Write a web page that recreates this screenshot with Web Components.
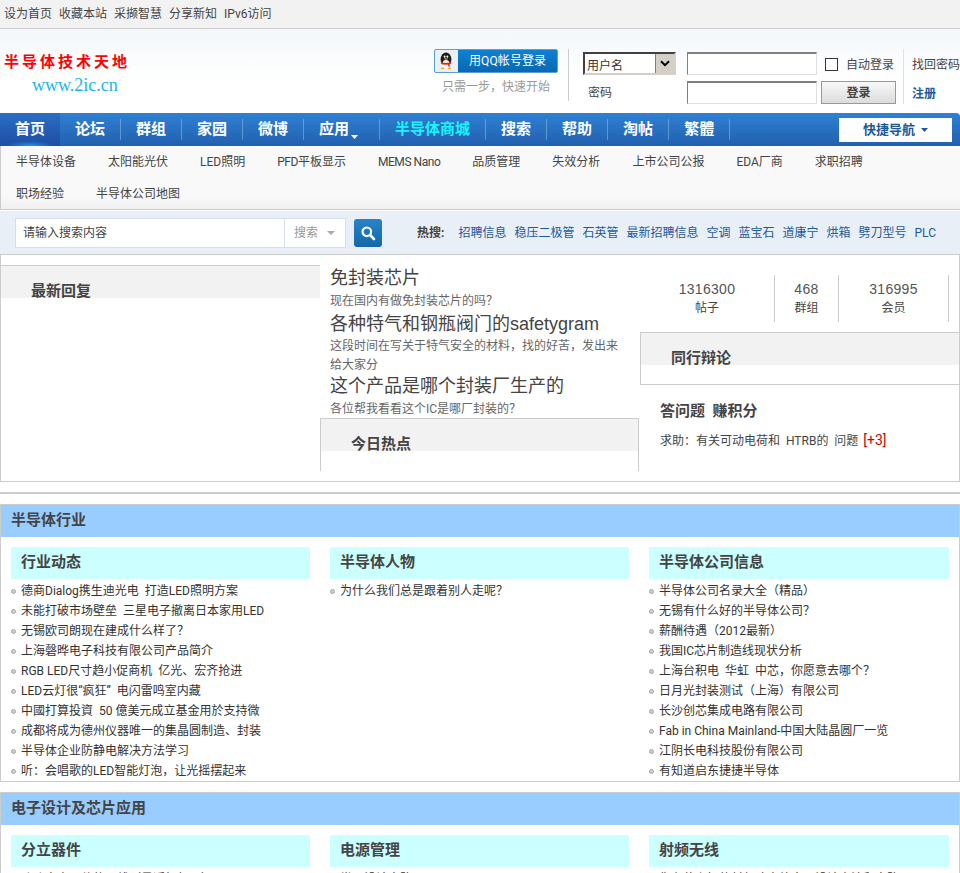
<!doctype html>
<html lang="zh-CN">
<head>
<meta charset="utf-8">
<title>半导体技术天地</title>
<style>
html { overflow: hidden; }
body {
  margin: 0;
  background: #fff;
  color: #444;
  font: 12px/20px Roboto, "Noto Sans CJK SC", sans-serif;
}
</style>
</head>
<body>
<site-topbar></site-topbar>
<site-header></site-header>
<site-nav></site-nav>
<site-subnav></site-subnav>
<site-search></site-search>

<home-panel>
  <clip-box slot="replies" title="最新回复"></clip-box>
  <hot-topic slot="topics" title="免封装芯片" style="--pt:2px;--pb:1px">现在国内有做免封装芯片的吗？</hot-topic>
  <hot-topic slot="topics" title="各种特气和钢瓶阀门的safetygram" style="--pt:1px;--pb:-1px">这段时间在写关于特气安全的材料，找的好苦，发出来给大家分</hot-topic>
  <hot-topic slot="topics" title="这个产品是哪个封装厂生产的" style="--pt:2px;--pb:-1px">各位帮我看看这个IC是哪厂封装的？</hot-topic>
  <clip-box slot="topics" title="今日热点" inset></clip-box>
  <stat-row slot="side"></stat-row>
  <clip-box slot="side" title="同行辩论" wide></clip-box>
  <ask-box slot="side"></ask-box>
</home-panel>

<hr-line></hr-line>

<forum-section title="半导体行业">
  <forum-column title="行业动态">
    <forum-item>德商Dialog携生迪光电&nbsp; 打造LED照明方案</forum-item>
    <forum-item>未能打破市场壁垒&nbsp; 三星电子撤离日本家用LED</forum-item>
    <forum-item>无锡欧司朗现在建成什么样了？</forum-item>
    <forum-item>上海磬晔电子科技有限公司产品简介</forum-item>
    <forum-item>RGB LED尺寸趋小促商机&nbsp; 亿光、宏齐抢进</forum-item>
    <forum-item>LED云灯很“疯狂”&nbsp; 电闪雷鸣室内藏</forum-item>
    <forum-item>中國打算投資&nbsp; 50 億美元成立基金用於支持微</forum-item>
    <forum-item>成都将成为德州仪器唯一的集晶圆制造、封装</forum-item>
    <forum-item>半导体企业防静电解决方法学习</forum-item>
    <forum-item>听：会唱歌的LED智能灯泡，让光摇摆起来</forum-item>
  </forum-column>
  <forum-column title="半导体人物">
    <forum-item>为什么我们总是跟着别人走呢？</forum-item>
  </forum-column>
  <forum-column title="半导体公司信息">
    <forum-item>半导体公司名录大全（精品）</forum-item>
    <forum-item>无锡有什么好的半导体公司？</forum-item>
    <forum-item>薪酬待遇（2012最新）</forum-item>
    <forum-item>我国IC芯片制造线现状分析</forum-item>
    <forum-item>上海台积电&nbsp; 华虹&nbsp; 中芯，你愿意去哪个？</forum-item>
    <forum-item>日月光封装测试（上海）有限公司</forum-item>
    <forum-item>长沙创芯集成电路有限公司</forum-item>
    <forum-item>Fab in China Mainland-中国大陆晶圆厂一览</forum-item>
    <forum-item>江阴长电科技股份有限公司</forum-item>
    <forum-item>有知道启东捷捷半导体</forum-item>
  </forum-column>
</forum-section>

<forum-section title="电子设计及芯片应用">
  <forum-column title="分立器件">
    <forum-item>聊聊电容器件的明线（最近如何用）</forum-item>
  </forum-column>
  <forum-column title="电源管理">
    <forum-item>常见设计电路图</forum-item>
  </forum-column>
  <forum-column title="射频无线">
    <forum-item>你有什么好的射频功率放大器设计方法和电路</forum-item>
  </forum-column>
</forum-section>

<script>
// small helper, every element just stamps a template into an open shadow root
function shadow(el, html) {
  const root = el.attachShadow({ mode: "open" });
  root.innerHTML = html;
  return root;
}

const linkList = (items) => items.map((t) => `<a>${t}</a>`).join("");

class SiteTopbar extends HTMLElement {
  connectedCallback() {
    shadow(this, `<style>
      :host { display: flex; height: 28px; padding-left: 4px; gap: 7px; line-height: 28px; background: #f2f2f2; border-bottom: 1px solid #ccc; color: #444; }
    </style>${linkList(["设为首页", "收藏本站", "采撷智慧", "分享新知", "IPv6访问"])}`);
  }
}
customElements.define("site-topbar", SiteTopbar);

class QqButton extends HTMLElement {
  connectedCallback() {
    shadow(this, `<style>
      :host { display: flex; width: 124px; height: 24px; box-sizing: border-box; border: 1px solid #5f9fd0; border-radius: 2px; overflow: hidden; background: linear-gradient(#0f80d0, #0868b4); color: #fff; line-height: 22px; }
      .ico { width: 23px; background: #e9f1f7; display: flex; align-items: center; justify-content: center; }
      span { padding-left: 11px; letter-spacing: .1px; }
    </style>
    <div class="ico"><svg width="16" height="18" viewBox="0 0 16 18">
      <ellipse cx="8" cy="7.5" rx="5.4" ry="7" fill="#1c1c1c"/>
      <ellipse cx="8" cy="12" rx="3.6" ry="4" fill="#f4f4f4"/>
      <path d="M3 9.5 Q8 12.5 13 9.5 L13.2 11.5 Q8 14 2.8 11.5Z" fill="#e2231a"/>
      <path d="M10.5 11.5 L12.5 15 L9.8 14Z" fill="#e2231a"/>
      <ellipse cx="6.6" cy="4.6" rx=".9" ry="1.2" fill="#fff"/>
      <ellipse cx="9.4" cy="4.6" rx=".9" ry="1.2" fill="#fff"/>
      <path d="M5.8 6.8 Q8 5.8 10.2 6.8 Q8 8.6 5.8 6.8Z" fill="#f5a81c"/>
      <path d="M2.5 16.5 Q5 14.5 6.5 16.8 Q4.5 17.8 2.5 16.5ZM13.5 16.5 Q11 14.5 9.5 16.8 Q11.5 17.8 13.5 16.5Z" fill="#f5a81c"/>
    </svg></div>
    <span>用QQ帐号登录</span>`);
  }
}
customElements.define("qq-button", QqButton);

class LoginBar extends HTMLElement {
  connectedCallback() {
    shadow(this, `<style>
      :host { display: flex; height: 55px; font-size: 12px; }
      .qq { width: 134px; }
      .qq p { margin: 4px 0 0 8px; color: #999; }
      .form { display: grid; grid-template-columns: 104px 130px 4px 75px; grid-template-rows: 23px 23px; row-gap: 6px; padding: 3px 0 0 14px; border-left: 1px solid #ccc; box-sizing: border-box; height: 52px; width: 328px; }
      .sel { position: relative; width: 93px; height: 23px; box-sizing: border-box; border: 2px solid; border-color: #404040 #d4d0c8 #d4d0c8 #404040; background: #fff; }
      select { appearance: none; border: 0; background: transparent; padding: 2px 0 0 2px; width: 100%; height: 100%; font: inherit; color: #333; outline: none; }
      .arr { position: absolute; right: 0; top: 0; bottom: 0; width: 18px; background: #d4d0c8; border-left: 1px solid #808080; display: flex; align-items: center; justify-content: center; pointer-events: none; }
      input[type=text], input[type=password] { box-sizing: border-box; width: 130px; height: 23px; margin: 0; padding: 0; border: 1px solid; border-color: #808080 #dfdfdf #dfdfdf #808080; border-width: 2px 1px 1px 1px; background: #fff; }
      .pw { padding-left: 5px; line-height: 25px; color: #444; }
      .auto { grid-column: 3 / 5; display: flex; align-items: center; white-space: nowrap; margin: 1px 0 0 8px; width: 90px; height: 23px; }
      .box { width: 11px; height: 11px; border: 1px solid #333; background: #fff; margin-right: 8px; flex: none; }
      button { grid-column: 4; box-sizing: border-box; width: 75px; height: 23px; border: 1px solid #999; background: linear-gradient(#f8f8f8, #dcdcdc); font: inherit; font-weight: bold; color: #444; padding: 0; }
      .links { border-left: 1px solid #d8e2ec; margin-left: 7px; padding: 2px 0 0 8px; box-sizing: border-box; height: 55px; display: flex; flex-direction: column; }
      .links a { line-height: 29px; white-space: nowrap; color: #444; }
      .links a + a { color: #1d5a9a; font-weight: bold; }
    </style>
    <div class="qq"><qq-button></qq-button><p>只需一步，快速开始</p></div>
    <div class="form">
      <div class="sel">
        <select><option>用户名</option></select>
        <div class="arr"><svg width="10" height="7" viewBox="0 0 10 7"><path d="M1 1.2 L5 5.2 L9 1.2" fill="none" stroke="#000" stroke-width="2"/></svg></div>
      </div>
      <input type="text">
      <div class="auto"><span class="box"></span>自动登录</div>
      <div class="pw">密码</div>
      <input type="password">
      <button>登录</button>
    </div>
    <div class="links"><a>找回密码</a><a>注册</a></div>`);
  }
}
customElements.define("login-bar", LoginBar);

class SiteHeader extends HTMLElement {
  connectedCallback() {
    shadow(this, `<style>
      :host { display: flex; justify-content: space-between; height: 84px; box-sizing: border-box; padding: 20px 0 0 4px; background: linear-gradient(#f3f7fb, #fff 60%); }
      .cn { color: #f00; font-size: 15px; font-weight: bold; letter-spacing: 3px; line-height: 26px; white-space: nowrap; }
      .en { color: #22b5e6; font: 18px/20px "Liberation Serif", serif; margin-left: 28px; }
    </style>
    <div><div class="cn">半导体技术天地</div><div class="en">www.2ic.cn</div></div>
    <login-bar></login-bar>`);
  }
}
customElements.define("site-header", SiteHeader);

class SiteNav extends HTMLElement {
  connectedCallback() {
    const items = ["论坛", "群组", "家园", "微博"].map((t) => `<a>${t}</a>`).join("");
    shadow(this, `<style>
      :host { display: flex; align-items: center; height: 33px; color: #fff; font-size: 15px; font-weight: bold; background: linear-gradient(#2f80d4, #2260ae); border-top-right-radius: 4px; }
      a { display: block; height: 21px; line-height: 21px; padding: 0 15px; border-right: 1px solid rgba(255,255,255,.28); white-space: nowrap; }
      .on { align-self: stretch; height: auto; width: 60px; box-sizing: border-box; line-height: 33px; border: 0; background: radial-gradient(ellipse 24px 5px at 50% 100%, #2f8fe8, transparent), linear-gradient(#2a6fc4, #1d4ea4); }
      .app { padding-right: 14px; position: relative; width: 46px; }
      .app svg { position: absolute; right: 21px; bottom: 1px; }
      .shop { color: #19f4ff; }
      .quick { margin-left: auto; margin-right: 8px; width: 113px; height: 24px; background: #fff; color: #1d5a9a; font-size: 13px; line-height: 24px; display: flex; align-items: center; justify-content: center; gap: 6px; }
    </style>
    <a class="on">首页</a>${items}
    <a class="app">应用<svg width="7" height="4" viewBox="0 0 7 4"><path d="M0 0H7L3.5 4Z" fill="#fff"/></svg></a>
    <a class="shop">半导体商城</a>
    <a>搜索</a><a>帮助</a><a>淘帖</a><a>繁體</a>
    <div class="quick">快捷导航<svg width="7" height="4" viewBox="0 0 7 4"><path d="M0 0H7L3.5 4Z" fill="#1d5a9a"/></svg></div>`);
  }
}
customElements.define("site-nav", SiteNav);

class SiteSubnav extends HTMLElement {
  connectedCallback() {
    shadow(this, `<style>
      :host { display: flex; flex-wrap: wrap; align-content: flex-start; height: 64px; box-sizing: border-box; padding-right: 30px; border-left: 1px solid #ccc; border-bottom: 1px solid #ccc; background: linear-gradient(#f9f9f9 80%, #f0f0f0); margin-bottom: 1px; }
      a { padding: 0 16px; margin-left: -1px; line-height: 32px; margin-right: 1px; white-space: nowrap; color: #444; }
      b { font-weight: normal; letter-spacing: -.45px; }
    </style>${linkList(["半导体设备", "太阳能光伏", "LED照明", "<b>PFD</b>平板显示", "<b>MEMS Nano</b>", "品质管理", "失效分析", "上市公司公报", "EDA厂商", "求职招聘", "职场经验", "半导体公司地图"])}`);
  }
}
customElements.define("site-subnav", SiteSubnav);

class SiteSearch extends HTMLElement {
  connectedCallback() {
    shadow(this, `<style>
      :host { display: flex; align-items: center; height: 44px; box-sizing: border-box; padding: 1px 0 0 15px; background: #e8eff6; border-bottom: 1px solid #ccc; }
      .field { display: flex; width: 331px; height: 30px; box-sizing: border-box; background: #fff; border: 1px solid #d3dfe9; line-height: 28px; }
      .q { width: 269px; padding-left: 7px; box-sizing: border-box; border-right: 1px solid #d3dfe9; color: #444; }
      .t { flex: 1; padding-left: 9px; color: #999; display: flex; align-items: center; gap: 9px; }
      .btn { width: 28px; height: 28px; margin-left: 8px; border-radius: 3px; background: linear-gradient(#2a83c6, #1268ab); display: flex; align-items: center; justify-content: center; }
      .hot { margin-left: 35px; font-weight: bold; color: #444; white-space: nowrap; }
      .links { display: flex; gap: 8px; margin-left: 14px; color: #1d5a9a; white-space: nowrap; }
    </style>
    <div class="field"><div class="q">请输入搜索内容</div><div class="t">搜索<svg width="8" height="4" viewBox="0 0 8 4"><path d="M0 0H8L4 4Z" fill="#aaa"/></svg></div></div>
    <div class="btn"><svg width="16" height="16" viewBox="0 0 16 16"><circle cx="6.8" cy="6.8" r="4.3" fill="none" stroke="#fff" stroke-width="2.2"/><path d="M10 10 L14 14" stroke="#fff" stroke-width="2.6" stroke-linecap="round"/></svg></div>
    <div class="hot">热搜:</div>
    <div class="links">${linkList(["招聘信息", "稳压二极管", "石英管", "最新招聘信息", "空调", "蓝宝石", "道康宁", "烘箱", "劈刀型号", "PLC"])}</div>`);
  }
}
customElements.define("site-search", SiteSearch);

// three column block under the search bar
class HomePanel extends HTMLElement {
  connectedCallback() {
    shadow(this, `<style>
      :host { display: grid; grid-template-columns: 319px 320px 1fr; height: 227px; box-sizing: border-box; border: 1px solid #ccc; border-top: 0; }
      .replies { padding-top: 10px; }
      .topics { padding-top: 11px; }
    </style>
    <div class="replies"><slot name="replies"></slot></div>
    <div class="topics"><slot name="topics"></slot></div>
    <div class="side"><slot name="side"></slot></div>`);
  }
}
customElements.define("home-panel", HomePanel);

// grey heading whose title gets cut off by the heading height, as on the site
class ClipBox extends HTMLElement {
  connectedCallback() {
    const title = this.getAttribute("title");
    this.removeAttribute("title");
    shadow(this, `<style>
      :host { display: block; box-sizing: border-box; }
      :host([inset]) { height: 53px; border-left: 1px solid #ccc; border-right: 1px solid #ccc; margin-right: 1px; }
      :host([wide]) { height: 53px; border-left: 1px solid #ccc; border-bottom: 1px solid #ccc; }
      .h { height: 33px; box-sizing: border-box; border-top: 1px solid #ccc; background: #f2f2f2; overflow: hidden; padding: 16px 0 0 30px; font-size: 15px; font-weight: bold; line-height: 18px; color: #444; }
    </style>
    <div class="h">${title}</div>`);
  }
}
customElements.define("clip-box", ClipBox);

class HotTopic extends HTMLElement {
  connectedCallback() {
    const title = this.getAttribute("title");
    this.removeAttribute("title");
    shadow(this, `<style>
      :host { display: block; padding: 0 20px 0 10px; }
      h3 { margin: 0; font: normal 18px/24px "Liberation Sans", "Noto Sans CJK SC", sans-serif; color: #444; white-space: nowrap; }
      p { margin: 0; padding-top: var(--pt, 0); margin-bottom: var(--pb, 0); font-size: 12px; line-height: 19px; color: #666; }
    </style>
    <h3>${title}</h3><p><slot></slot></p>`);
  }
}
customElements.define("hot-topic", HotTopic);

class StatRow extends HTMLElement {
  connectedCallback() {
    const cell = (n, l, w) => `<div class="c" style="width:${w}px"><b>${n}</b><span>${l}</span></div>`;
    shadow(this, `<style>
      :host { display: flex; height: 47px; margin: 20px 0 10px; }
      .c { box-sizing: border-box; border-right: 1px solid #ccc; text-align: center; display: flex; flex-direction: column; }
      b { font: normal 14px/29px "Liberation Sans", sans-serif; letter-spacing: .3px; color: #555; }
      span { font-size: 12px; line-height: 20px; margin-top: -6px; color: #444; }
    </style>
    ${cell("1316300", "帖子", 135)}${cell("468", "群组", 64)}${cell("316995", "会员", 110)}`);
  }
}
customElements.define("stat-row", StatRow);

class AskBox extends HTMLElement {
  connectedCallback() {
    shadow(this, `<style>
      :host { display: block; padding: 15px 0 0 20px; }
      h4 { margin: 0 0 8px; font-size: 15px; line-height: 22px; color: #444; }
      p { margin: 0; line-height: 20px; color: #444; }
      i { font-style: normal; font-size: 14px; margin-left: 2px; color: #c00; }
    </style>
    <h4>答问题&nbsp;&nbsp;赚积分</h4>
    <p>求助：有关可动电荷和&nbsp; HTRB的&nbsp; 问题 <i>[+3]</i></p>`);
  }
}
customElements.define("ask-box", AskBox);

class HrLine extends HTMLElement {
  connectedCallback() {
    shadow(this, `<style>
      :host { display: block; height: 2px; margin: 10px 0; background: #ccc; }
    </style>`);
  }
}
customElements.define("hr-line", HrLine);

class ForumSection extends HTMLElement {
  connectedCallback() {
    const title = this.getAttribute("title");
    this.removeAttribute("title");
    shadow(this, `<style>
      :host { display: block; box-sizing: border-box; border: 1px solid #ccc; margin-bottom: 10px; }
      h2 { margin: 0; height: 32px; padding-left: 10px; background: #9cf; font-size: 15px; line-height: 31px; color: #444; }
      .cols { display: grid; grid-template-columns: 299px 299px 300px; column-gap: 20px; padding: 10px 10px 0; height: 244px; box-sizing: border-box; }
    </style>
    <h2>${title}</h2><div class="cols"><slot></slot></div>`);
  }
}
customElements.define("forum-section", ForumSection);

class ForumColumn extends HTMLElement {
  connectedCallback() {
    const title = this.getAttribute("title");
    this.removeAttribute("title");
    shadow(this, `<style>
      :host { display: block; }
      h3 { margin: 0 0 2px; height: 32px; padding-left: 10px; background: #cff; font-size: 15px; line-height: 31px; color: #444; }
    </style>
    <h3>${title}</h3><slot></slot>`);
  }
}
customElements.define("forum-column", ForumColumn);

class ForumItem extends HTMLElement {
  connectedCallback() {
    shadow(this, `<style>
      :host { display: flex; align-items: center; height: 20px; white-space: nowrap; color: #333; }
      i { width: 5px; height: 5px; box-sizing: border-box; border-radius: 50%; background: #ccc; border: 1px solid #aaa; margin-right: 5px; flex: none; }
    </style>
    <i></i><slot></slot>`);
  }
}
customElements.define("forum-item", ForumItem);
</script>
</body>
</html>
